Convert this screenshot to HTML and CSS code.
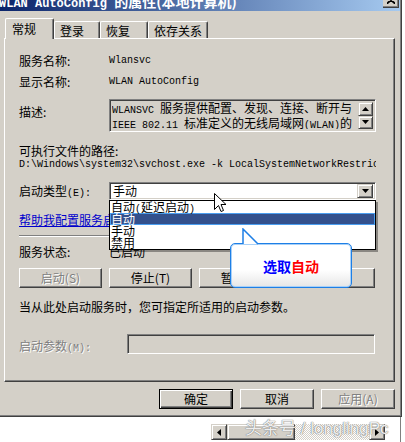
FILE: index.html
```html
<!DOCTYPE html>
<html lang="zh-CN">
<head>
  <meta charset="UTF-8" />
  <title>WLAN AutoConfig 的属性(本地计算机)</title>
  <link rel="stylesheet" href="styles.css">
</head>
<body>
  <div class="window">
    <div class="titlebar">
      <span class="title"><span class="mono">WLAN AutoConfig </span>的属性(本地计算机)</span>
      <span class="close">
        <svg width="8" height="7" viewBox="0 0 8 7"><path d="M0 0 L8 7 M1 0 L9 7 M8 0 L0 7 M7 0 L-1 7" stroke="#000" stroke-width="1.2"/></svg>
      </span>
    </div>

    <div class="tabs">
      <div class="tab active">常规</div>
      <div class="tab t2">登录</div>
      <div class="tab t3">恢复</div>
      <div class="tab t4">依存关系</div>
    </div>

    <div class="panel">
      <div class="row r-name">
        <span class="label">服务名称:</span>
        <span class="mono">Wlansvc</span>
      </div>
      <div class="row r-display">
        <span class="label">显示名称:</span>
        <span class="mono">WLAN AutoConfig</span>
      </div>
      <div class="row r-desc">
        <span class="label desc-label">描述:</span>
        <div class="desc-box sunken">
          <div class="desc-text">
            <div><span class="mono">WLANSVC </span>服务提供配置、发现、连接、断开与</div>
            <div><span class="mono">IEEE 802.11 </span>标准定义的无线局域网<span class="mono">(WLAN)</span>的</div>
          </div>
          <div class="vscroll">
            <span class="arrow-btn"><svg width="7" height="4" viewBox="0 0 7 4"><polygon points="3.5,0 7,4 0,4" fill="#000"/></svg></span>
            <span class="arrow-btn"><svg width="7" height="4" viewBox="0 0 7 4"><polygon points="0,0 7,0 3.5,4" fill="#000"/></svg></span>
          </div>
        </div>
      </div>
      <div class="r-exe">可执行文件的路径:</div>
      <div class="r-path mono">D:\Windows\system32\svchost.exe -k LocalSystemNetworkRestricted</div>
      <div class="row r-startup">
        <span class="label startup-label">启动类型<span class="mono">(E):</span></span>
        <div class="combo sunken">
          <span class="combo-text">手动</span>
          <span class="arrow-btn combo-btn"><svg width="7" height="4" viewBox="0 0 7 4"><polygon points="0,0 7,0 3.5,4" fill="#000"/></svg></span>
        </div>
      </div>
      <a class="r-link" href="#">帮助我配置服务启动选项。</a>
      <div class="separator"></div>
      <div class="row r-status">
        <span class="label">服务状态:</span>
        <span>已启动</span>
      </div>
      <div class="r-buttons">
        <span class="btn disabled">启动(S)</span>
        <span class="btn">停止(T)</span>
        <span class="btn">暂停(P)</span>
        <span class="btn wide">恢复(R)</span>
      </div>
      <div class="r-hint">当从此处启动服务时，您可指定所适用的启动参数。</div>
      <div class="row r-param">
        <span class="label param-label disabled">启动参数<span class="mono">(M):</span></span>
        <div class="param-input sunken"></div>
      </div>
    </div>

    <div class="footer">
      <span class="btn dlg default">确定</span>
      <span class="btn dlg">取消</span>
      <span class="btn dlg disabled">应用(A)</span>
    </div>
  </div>

  <div class="below">
    <div class="hscroll">
      <span class="arrow-btn h-btn"><svg width="4" height="7" viewBox="0 0 4 7"><polygon points="4,0 4,7 0,3.5" fill="#000"/></svg></span>
      <span class="h-thumb"></span>
      <span class="h-track"></span>
      <span class="arrow-btn h-btn"><svg width="4" height="7" viewBox="0 0 4 7"><polygon points="0,0 4,3.5 0,7" fill="#000"/></svg></span>
    </div>
  </div>

  <!-- overlays -->
  <ul class="dropdown">
    <li>自动<span class="mono">(</span>延迟启动<span class="mono">)</span></li>
    <li class="selected">自动</li>
    <li>手动</li>
    <li>禁用</li>
  </ul>

  <div class="callout">
    <svg class="callout-tip" width="18" height="17" viewBox="0 0 18 17">
      <polygon points="1,16 1,1 16,16" fill="#fff"/>
      <polyline points="1,16 1,1 16,16" fill="none" stroke="#1e7fe6" stroke-width="1.5"/>
    </svg>
    <span class="blue">选取</span><span class="red">自动</span>
  </div>

  <svg class="cursor" width="13" height="21" viewBox="0 0 13 21">
    <path d="M0.5 0.5 L0.5 16.5 L4.5 12.5 L7 18.5 L9.5 17.5 L7 11.5 L12 11.5 Z" fill="#fff" stroke="#000" stroke-width="1"/>
  </svg>

  <div class="watermark">头条号 / longlingPc</div>
</body>
</html>
```

FILE: styles.css
```css
* {
  box-sizing: border-box;
}
body {
  margin: 0;
  width: 405px;
  height: 442px;
  overflow: hidden;
  position: relative;
  background: #fff;
  font-family: "Noto Sans CJK SC", sans-serif;
  font-size: 12px;
  line-height: 12px;
  color: #000;
}
.mono {
  font-family: "Liberation Mono", "Noto Sans CJK SC", monospace;
  font-size: 10px;
}

/* window frame */
.window {
  width: 402px;
  height: 417px;
  background: #d4d0c8;
  border-right: 1px solid #404040;
  border-bottom: 1px solid #404040;
  box-shadow: inset -1px -1px 0 #808080;
}
.titlebar {
  display: flex;
  height: 11px;
  margin-right: 1px;
  overflow: hidden;
  background: linear-gradient(to right, #0a246a, #a6caf0);
}
.title {
  margin: -6px 0 0 -1px;
  font-size: 14px;
  line-height: 14px;
  font-weight: bold;
  color: #fff;
  white-space: nowrap;
}
.title .mono {
  font-size: 12px;
  font-weight: bold;
}
.close {
  display: flex;
  align-items: flex-end;
  justify-content: center;
  width: 16px;
  height: 14px;
  margin: -6px 1px 0 auto;
  padding-bottom: 3px;
  background: #d4d0c8;
  border-right: 1px solid #404040;
  border-bottom: 1px solid #404040;
  box-shadow: inset -1px -1px 0 #808080;
}

/* tabs */
.tabs {
  display: flex;
  align-items: flex-end;
  height: 20px;
  margin: 7px 0 0 5px;
}
.tab {
  height: 17px;
  padding: 3px 0 0 5px;
  border: 1px solid #fff;
  border-bottom: none;
  border-right-color: #404040;
  border-radius: 2px 2px 0 0;
  box-shadow: inset -1px 0 0 #808080;
  background: #d4d0c8;
}
.tab.active {
  position: relative;
  z-index: 1;
  width: 49px;
  height: 21px;
  margin-bottom: -1px;
  padding: 4px 0 0 6px;
}
.t2 { width: 46px; }
.t3 { width: 48px; }
.t4 { width: 60px; }

/* panel */
.panel {
  display: flex;
  flex-direction: column;
  width: 391px;
  height: 344px;
  margin-left: 4px;
  padding-left: 14px;
  border: 1px solid #fff;
  border-right-color: #404040;
  border-bottom-color: #404040;
  box-shadow: inset -1px -1px 0 #808080;
}
.row {
  display: flex;
  align-items: flex-start;
}
.label {
  flex: none;
  width: 90px;
}
.sunken {
  border: 1px solid;
  border-color: #808080 #fff #fff #808080;
  box-shadow: inset 1px 1px 0 #404040, inset -1px -1px 0 #d4d0c8;
}

.r-name { margin-top: 16px; }
.r-display { margin-top: 9px; }
.r-desc { margin-top: 11px; }
.desc-label { padding-top: 7px; }
.desc-box {
  display: flex;
  width: 267px;
  height: 33px;
  padding: 2px 2px 2px 2px;
}
.desc-text {
  flex: 1;
  white-space: nowrap;
  overflow: hidden;
}
.vscroll {
  display: flex;
  flex-direction: column;
  justify-content: space-between;
  width: 15px;
}
.arrow-btn {
  display: flex;
  align-items: center;
  justify-content: center;
  width: 15px;
  height: 14px;
  background: #d4d0c8;
  border: 1px solid;
  border-color: #d4d0c8 #404040 #404040 #d4d0c8;
  box-shadow: inset 1px 1px 0 #fff, inset -1px -1px 0 #808080;
}

.r-exe { margin-top: 13px; }
.r-path {
  width: 357px;
  margin-top: 2px;
  line-height: 12px;
  white-space: nowrap;
  overflow: hidden;
}

.r-startup { margin-top: 11px; }
.startup-label { padding-top: 3px; }
.combo {
  display: flex;
  align-items: center;
  width: 267px;
  height: 18px;
  padding: 2px;
  background: #fff;
}
.combo-text {
  flex: 1;
  padding-left: 1px;
  line-height: 14px;
}
.combo-btn {
  width: 16px;
}

.r-link {
  align-self: flex-start;
  margin-top: 14px;
  color: #0000cc;
  text-decoration: underline;
}
.separator {
  width: 357px;
  height: 2px;
  margin-top: 9px;
  border-top: 1px solid #808080;
  border-bottom: 1px solid #fff;
}
.r-status { margin-top: 9px; }

.r-buttons {
  display: flex;
  gap: 7px;
  margin-top: 10px;
}
.btn {
  display: flex;
  align-items: center;
  justify-content: center;
  width: 83px;
  height: 20px;
  background: #d4d0c8;
  border: 1px solid;
  border-color: #fff #404040 #404040 #fff;
  box-shadow: inset -1px -1px 0 #808080;
}
.btn.wide { width: 86px; }
.disabled {
  color: #808080;
  text-shadow: 1px 1px 0 #fff;
}

.r-hint { margin-top: 13px; }
.r-param { margin-top: 21px; }
.param-label {
  width: 108px;
  padding-top: 6px;
}
.param-input {
  width: 248px;
  height: 20px;
  background: #d4d0c8;
}

/* dialog buttons */
.footer {
  display: flex;
  justify-content: flex-end;
  gap: 7px;
  margin-top: 7px;
  padding-right: 6px;
}
.btn.dlg { width: 74px; }
.btn.default {
  border-color: #000;
  box-shadow: inset 1px 1px 0 #fff, inset -1px -1px 0 #404040, inset -2px -2px 0 #808080;
}

/* below the dialog */
.below {
  width: 401px;
  height: 25px;
  border-right: 1px solid #808080;
  padding-top: 7px;
}
.hscroll {
  display: flex;
  height: 16px;
  margin-left: 211px;
}
.h-btn {
  width: 16px;
  height: 16px;
}
.h-thumb {
  width: 68px;
  background: #d4d0c8;
  border: 1px solid;
  border-color: #d4d0c8 #404040 #404040 #d4d0c8;
  box-shadow: inset 1px 1px 0 #fff, inset -1px -1px 0 #808080;
}
.h-track {
  width: 74px;
  background: repeating-conic-gradient(#d4d0c8 0 25%, #fff 0 50%) 0 0 / 2px 2px;
}

/* dropdown list */
.dropdown {
  position: absolute;
  left: 109px;
  top: 200px;
  width: 267px;
  height: 50px;
  margin: 0;
  padding: 0;
  list-style: none;
  background: #fff;
  border: 1px solid #000;
  box-shadow: 2px 2px 0 rgba(0, 0, 0, 0.35);
}
.dropdown li {
  height: 12px;
  padding-left: 1px;
  line-height: 12px;
  white-space: nowrap;
}
.dropdown .selected {
  background: #33508c;
  color: #fff;
  box-shadow: inset 0 0 0 1px #4a9ef0;
}

/* callout */
.callout {
  position: absolute;
  left: 230px;
  top: 243px;
  width: 122px;
  height: 45px;
  display: flex;
  align-items: center;
  justify-content: center;
  border: 1px solid #1e7fe6;
  border-radius: 5px;
  box-shadow: inset 0 0 0 1px #a8d0f7;
  background: linear-gradient(#fff 60%, #e6e6e6);
  font-size: 14px;
  line-height: 14px;
  font-weight: bold;
}
.callout-tip {
  position: absolute;
  left: 11px;
  top: -16px;
}
.blue { color: #0000ff; }
.red { color: #ff0000; }

.cursor {
  position: absolute;
  left: 214px;
  top: 193px;
}

.watermark {
  position: absolute;
  left: 245px;
  top: 419px;
  font-family: "Liberation Sans", "Noto Sans CJK SC", sans-serif;
  font-size: 17px;
  line-height: 20px;
  color: rgba(255, 255, 255, 0.9);
  text-shadow: 0 0 1px #777, 0 0 1px #777;
  white-space: nowrap;
}
```
